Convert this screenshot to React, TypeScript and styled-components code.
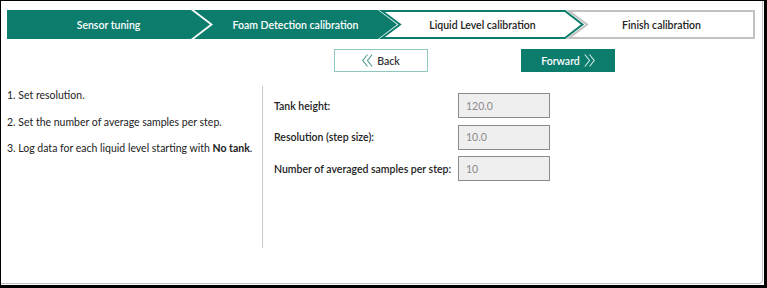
import styled, { createGlobalStyle } from 'styled-components';

const TEAL = '#0c7d6d';

const GlobalStyle = createGlobalStyle`
  html, body {
    margin: 0;
    padding: 0;
    background: #ffffff;
  }
  body {
    font-family: Lato, 'Liberation Sans', sans-serif;
    color: #222;
  }
`;

type StepKind = 'done' | 'active' | 'todo';

interface StepDef {
  label: string
  kind: StepKind
}

const steps: StepDef[] = [
  { label: 'Sensor tuning', kind: 'done' },
  { label: 'Foam Detection calibration', kind: 'done' },
  { label: 'Liquid Level calibration', kind: 'active' },
  { label: 'Finish calibration', kind: 'todo' },
];

const fields = [
  { label: 'Tank height:', value: '120.0' },
  { label: 'Resolution (step size):', value: '10.0' },
  { label: 'Number of averaged samples per step:', value: '10' },
];

const CELL = 187;
const TIP = 16;
const DEPTH = 19;
const STEP_H = 29;

// chevron outline behind each step label
const StepShape = ({ w, first, last, kind }: { w: number; first: boolean; last: boolean; kind: StepKind }) => {
  const h = STEP_H;
  const i = kind === 'done' ? 0 : 1;
  const pts: string[] = [];
  pts.push(`${i},${i}`);
  if (last) {
    pts.push(`${w - i},${i}`, `${w - i},${h - i}`);
  } else {
    pts.push(`${w - DEPTH},${i}`, `${w - i * 1.5},${h / 2}`, `${w - DEPTH},${h - i}`);
  }
  pts.push(`${i},${h - i}`);
  if (!first) pts.push(`${DEPTH},${h / 2}`);

  const fill = kind === 'done' ? TEAL : '#ffffff';
  const stroke = kind === 'done' ? 'none' : kind === 'active' ? TEAL : '#c2c2c2';

  return (
    <ShapeSvg width={w} height={h} viewBox={`0 0 ${w} ${h}`}>
      <polygon points={pts.join(' ')} fill={fill} stroke={stroke} strokeWidth={2} strokeLinejoin="miter" />
    </ShapeSvg>
  );
};

const DoubleChevron = ({ dir, color }: { dir: 'left' | 'right'; color: string }) => (
  <svg width="11" height="13" viewBox="0 0 11 13" fill="none" stroke={color} strokeWidth="1.1">
    {dir === 'left' ? (
      <>
        <polyline points="5.5,0.5 0.8,6.5 5.5,12.5" />
        <polyline points="10.2,0.5 5.5,6.5 10.2,12.5" />
      </>
    ) : (
      <>
        <polyline points="0.8,0.5 5.5,6.5 0.8,12.5" />
        <polyline points="5.5,0.5 10.2,6.5 5.5,12.5" />
      </>
    )}
  </svg>
);

const App = () => {
  return (
    <>
      <GlobalStyle />
      <Frame>
        <Panel>
          <Stepper>
            {steps.map((s, idx) => {
              const last = idx === steps.length - 1;
              const w = last ? CELL : CELL + TIP;
              return (
                <Step key={s.label} $w={w} $last={last} $kind={s.kind}>
                  <StepShape w={w} first={idx === 0} last={last} kind={s.kind} />
                  <StepLabel>{s.label}</StepLabel>
                </Step>
              );
            })}
          </Stepper>

          <ButtonRow>
            <BackButton>
              <DoubleChevron dir="left" color="#4f9d92" />
              Back
            </BackButton>
            <ForwardButton>
              Forward
              <DoubleChevron dir="right" color="#cfe9e4" />
            </ForwardButton>
          </ButtonRow>

          <Content>
            <Instructions>
              <p>1. Set resolution.</p>
              <p>2. Set the number of average samples per step.</p>
              <p>3. Log data for each liquid level starting with <b>No tank</b>.</p>
            </Instructions>
            <Settings>
              {fields.map(f => (
                <FieldRow key={f.label}>
                  <FieldLabel>{f.label}</FieldLabel>
                  <FieldInput value={f.value} readOnly />
                </FieldRow>
              ))}
            </Settings>
          </Content>
        </Panel>
      </Frame>
    </>
  );
};

const Frame = styled.div`
  height: 100vh;
  box-sizing: border-box;
  border: 1px solid #000;
  border-right-width: 3px;
  border-bottom-width: 3px;
  padding: 0 1px 1px 0;
`;

const Panel = styled.div`
  height: 100%;
  box-sizing: border-box;
  border-right: 1px solid #c4c4c4;
  border-bottom: 1px solid #c4c4c4;
  border-bottom-right-radius: 4px;
  padding: 9px 6px 0 6px;
`;

const Stepper = styled.div`
  display: flex;
  height: ${STEP_H}px;
`;

const Step = styled.div<{ $w: number; $last: boolean; $kind: StepKind }>`
  position: relative;
  flex: none;
  width: ${p => p.$w}px;
  height: ${STEP_H}px;
  margin-right: ${p => (p.$last ? 0 : -TIP)}px;
  display: flex;
  align-items: center;
  justify-content: center;
  font-size: 10.5px;
  font-weight: 600;
  white-space: nowrap;
  color: ${p => (p.$kind === 'done' ? '#ffffff' : '#222222')};
`;

const ShapeSvg = styled.svg`
  position: absolute;
  left: 0;
  top: 0;
  overflow: visible;
`;

const StepLabel = styled.span`
  position: relative;
`;

const ButtonRow = styled.div`
  display: flex;
  gap: 93px;
  margin-top: 10px;
  padding-left: 327px;
`;

const ButtonBase = styled.button`
  width: 94px;
  height: 23px;
  box-sizing: border-box;
  display: flex;
  align-items: center;
  justify-content: center;
  gap: 4px;
  font-family: Lato, 'Liberation Sans', sans-serif;
  font-size: 10.5px;
  font-weight: 600;
  padding: 0;
  cursor: pointer;
`;

const BackButton = styled(ButtonBase)`
  background: #ffffff;
  color: #333;
  border: 1px solid #8fc6be;
`;

const ForwardButton = styled(ButtonBase)`
  background: ${TEAL};
  color: #ffffff;
  border: 1px solid ${TEAL};
`;

const Content = styled.div`
  display: flex;
  margin-top: 14px;
  height: 162px;
`;

const Instructions = styled.div`
  width: 255px;
  flex: none;
  border-right: 1px solid #c8c8c8;
  padding-top: 1px;
  font-size: 10.5px;
  white-space: nowrap;
  color: #222;

  p {
    margin: 0 0 10.5px 0;
    line-height: 16px;
  }
  b {
    font-weight: 700;
  }
`;

const Settings = styled.div`
  display: flex;
  flex-direction: column;
  gap: 6.5px;
  padding: 7px 0 0 11px;
`;

const FieldRow = styled.div`
  display: grid;
  grid-template-columns: 184px 92px;
  align-items: center;
`;

const FieldLabel = styled.span`
  font-size: 10.5px;
  font-weight: 600;
  white-space: nowrap;
  color: #222;
`;

const FieldInput = styled.input`
  box-sizing: border-box;
  width: 92px;
  height: 25px;
  padding: 0 7px;
  border: 1px solid #8a8a8a;
  background: #efefef;
  color: #8a8a8a;
  font-family: Lato, 'Liberation Sans', sans-serif;
  font-size: 10.5px;
  outline: none;
`;

export default App;
